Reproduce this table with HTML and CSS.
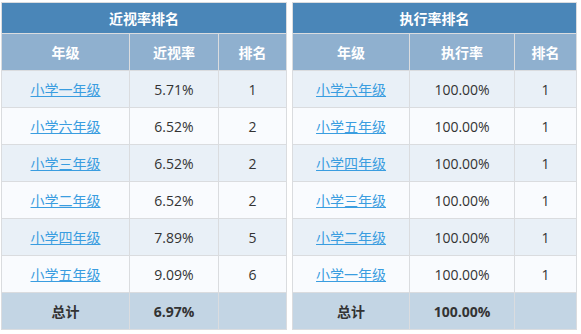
FILE: index.html
```html
<!DOCTYPE html>
<html lang="zh">
<head>
<meta charset="utf-8">
<link rel="stylesheet" href="styles.css">
</head>
<body>
<div class="wrap">
  <table class="rank rank-left">
    <colgroup><col class="c1"><col class="c2"><col class="c3"></colgroup>
    <thead>
      <tr class="title"><th colspan="3">近视率排名</th></tr>
      <tr class="head"><th>年级</th><th>近视率</th><th>排名</th></tr>
    </thead>
    <tbody>
      <tr><td><a href="#">小学一年级</a></td><td>5.71%</td><td>1</td></tr>
      <tr><td><a href="#">小学六年级</a></td><td>6.52%</td><td>2</td></tr>
      <tr><td><a href="#">小学三年级</a></td><td>6.52%</td><td>2</td></tr>
      <tr><td><a href="#">小学二年级</a></td><td>6.52%</td><td>2</td></tr>
      <tr><td><a href="#">小学四年级</a></td><td>7.89%</td><td>5</td></tr>
      <tr><td><a href="#">小学五年级</a></td><td>9.09%</td><td>6</td></tr>
      <tr class="total"><td>总计</td><td>6.97%</td><td></td></tr>
    </tbody>
  </table>
  <table class="rank rank-right">
    <colgroup><col class="d1"><col class="d2"><col class="d3"></colgroup>
    <thead>
      <tr class="title"><th colspan="3">执行率排名</th></tr>
      <tr class="head"><th>年级</th><th>执行率</th><th>排名</th></tr>
    </thead>
    <tbody>
      <tr><td><a href="#">小学六年级</a></td><td>100.00%</td><td>1</td></tr>
      <tr><td><a href="#">小学五年级</a></td><td>100.00%</td><td>1</td></tr>
      <tr><td><a href="#">小学四年级</a></td><td>100.00%</td><td>1</td></tr>
      <tr><td><a href="#">小学三年级</a></td><td>100.00%</td><td>1</td></tr>
      <tr><td><a href="#">小学二年级</a></td><td>100.00%</td><td>1</td></tr>
      <tr><td><a href="#">小学一年级</a></td><td>100.00%</td><td>1</td></tr>
      <tr class="total"><td>总计</td><td>100.00%</td><td></td></tr>
    </tbody>
  </table>
</div>
</body>
</html>
```
FILE: styles.css
```css
html, body {
  margin: 0;
  padding: 0;
  background: #ffffff;
}
body {
  font-family: "Open Sans", "Noto Sans CJK SC", sans-serif;
  font-size: 14px;
  color: #333333;
}
.wrap {
  display: flex;
  gap: 5px;
  padding: 2px 0 0 1px;
  align-items: flex-start;
}
.rank {
  border-collapse: collapse;
  table-layout: fixed;
}
.rank-left { width: 285px; }
.rank-right { width: 284px; }
.c1 { width: 128px; }
.c2 { width: 89px; }
.c3 { width: 68px; }
.d1 { width: 117px; }
.d2 { width: 105px; }
.d3 { width: 62px; }
.rank th, .rank td {
  border: 1px solid #dadcdf;
  text-align: center;
  padding: 0;
}
.title th {
  background: #4a86b8;
  color: #ffffff;
  font-weight: bold;
  height: 30px;
  font-size: 14px;
}
.head th {
  background: #8fb0cf;
  color: #ffffff;
  font-weight: bold;
  height: 36px;
}
.rank td {
  height: 36px;
}
.rank tbody tr:nth-child(odd) td { background: #e9f0f7; }
.rank tbody tr:nth-child(even) td { background: #f9fbfe; }
.rank tbody tr.total td {
  background: #c3d5e4;
  font-weight: bold;
}
.rank a {
  color: #3a9de0;
  text-decoration: underline;
}
```
